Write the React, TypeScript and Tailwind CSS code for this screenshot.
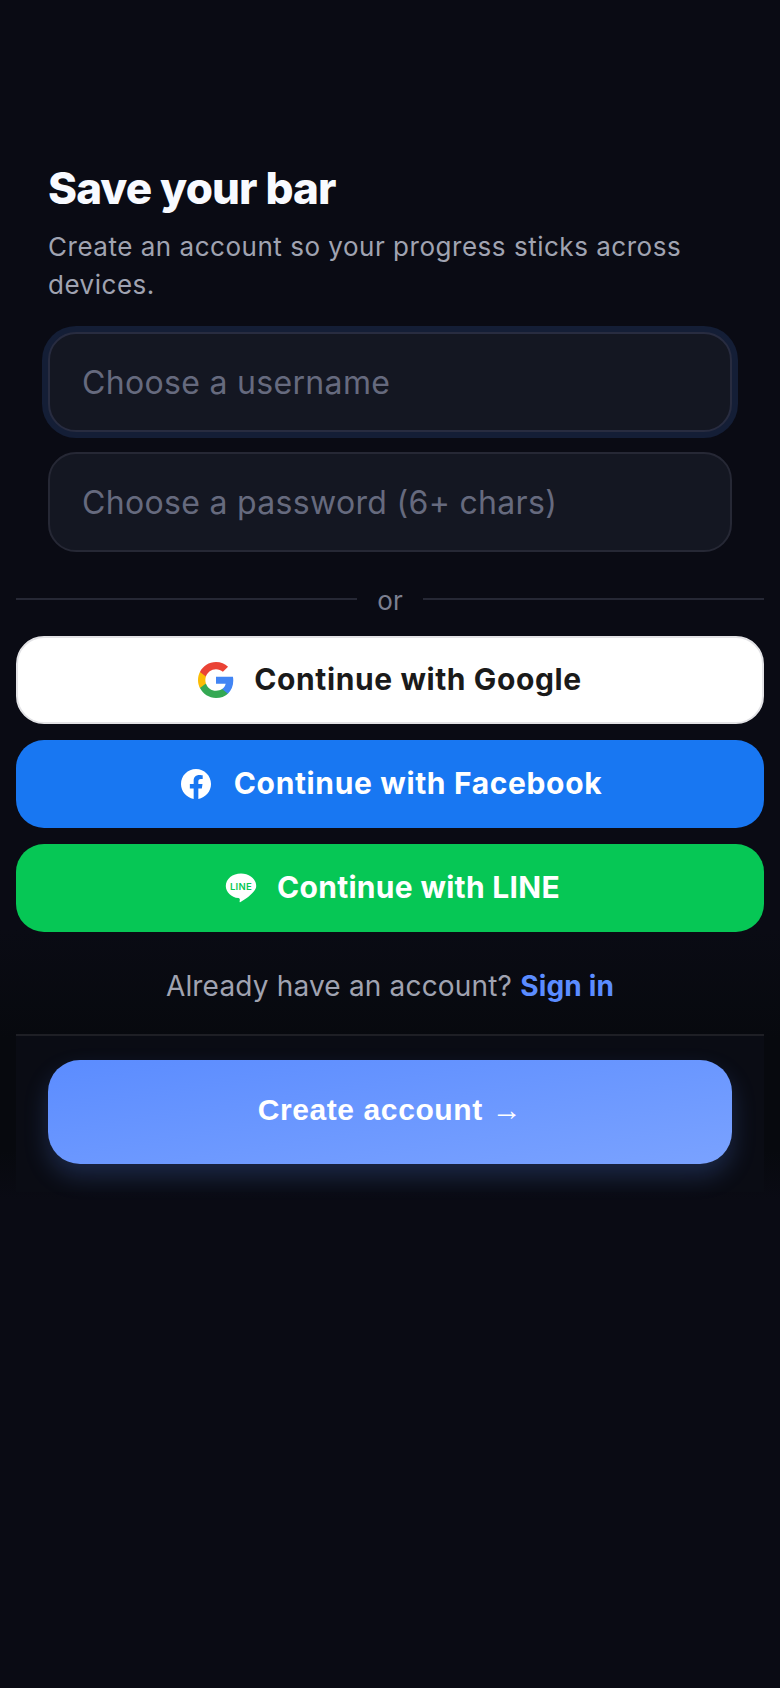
export default function App() {
  return (
    <div className="min-h-[1688px] bg-[linear-gradient(#0a0b14_930px,#07090e_1040px,#07090e_1150px,#0a0b14_1200px)] px-4 pt-[160px] font-['Inter',sans-serif]">
      <div className="px-8">
        <h1 className="text-[44px] leading-[56px] font-extrabold tracking-[-0.88px] text-[#f8faff]">Save your bar</h1>
        <p className="mt-3 text-[26px] leading-[38px] tracking-[0.52px] text-[#a0a3b1]">
          Create an account so your progress sticks across devices.
        </p>
        <input
          placeholder="Choose a username"
          className="mt-7 block h-[100px] w-full rounded-[28px] border-2 border-[#282c40] bg-[#141722] px-8 text-[32px] tracking-[0.32px] text-white shadow-[0_0_0_6px_#141e36] outline-none placeholder:text-[#666a7e]"
        />
        <input
          placeholder="Choose a password (6+ chars)"
          className="mt-5 block h-[100px] w-full rounded-[28px] border-2 border-[#262835] bg-[#141722] px-8 text-[32px] tracking-[0.32px] text-white outline-none placeholder:text-[#666a7e]"
        />
      </div>

      <div className="mt-[31px] flex h-8 items-center gap-5">
        <div className="h-[2px] flex-1 bg-[#262835]" />
        <span className="pt-1 text-[26px] leading-8 text-[#7c7f90]">or</span>
        <div className="h-[2px] flex-1 bg-[#262835]" />
      </div>

      <div className="mt-[21px] flex flex-col gap-4">
        <button className="flex h-[88px] items-center justify-center gap-5 rounded-[28px] border-2 border-[#e3e3e6] bg-white text-[30px] font-bold tracking-[0.6px] text-[#1a1a1a]">
          <svg width="36" height="36" viewBox="1 1 22 22">
            <path fill="#4285F4" d="M22.56 12.25c0-.78-.07-1.53-.2-2.25H12v4.26h5.92c-.26 1.37-1.04 2.53-2.21 3.31v2.77h3.57c2.08-1.92 3.28-4.74 3.28-8.09z" />
            <path fill="#34A853" d="M12 23c2.97 0 5.46-.98 7.28-2.66l-3.57-2.77c-.98.66-2.23 1.06-3.71 1.06-2.86 0-5.29-1.93-6.16-4.53H2.18v2.84C3.99 20.53 7.7 23 12 23z" />
            <path fill="#FBBC05" d="M5.84 14.09c-.22-.66-.35-1.36-.35-2.09s.13-1.43.35-2.09V7.07H2.18C1.43 8.55 1 10.22 1 12s.43 3.45 1.18 4.93l2.85-2.22.81-.62z" />
            <path fill="#EA4335" d="M12 5.38c1.62 0 3.06.56 4.21 1.64l3.15-3.15C17.45 2.09 14.97 1 12 1 7.7 1 3.99 3.47 2.18 7.07l3.66 2.84c.87-2.6 3.3-4.53 6.16-4.53z" />
          </svg>
          <span className="pb-[2px]">Continue with Google</span>
        </button>
        <button className="flex h-[88px] items-center justify-center gap-[23px] rounded-[28px] bg-[#1877f2] pl-[3px] text-[30px] font-bold tracking-[0.64px] text-white">
          <svg width="30" height="30" viewBox="0 0 24 24" fill="#fff">
            <path d="M24 12.073c0-6.627-5.373-12-12-12s-12 5.373-12 12c0 5.99 4.388 10.954 10.125 11.854v-8.385H7.078v-3.47h3.047V9.43c0-3.007 1.792-4.669 4.533-4.669 1.312 0 2.686.235 2.686.235v2.953H15.83c-1.491 0-1.956.925-1.956 1.874v2.25h3.328l-.532 3.47h-2.796v8.385C19.612 23.027 24 18.062 24 12.073z" />
          </svg>
          <span className="pb-[2px]">Continue with Facebook</span>
        </button>
        <button className="flex h-[88px] items-center justify-center gap-5 rounded-[28px] bg-[#06c755] pl-[5px] text-[30px] font-bold tracking-[0.3px] text-white">
          <svg width="32" height="30" viewBox="0 0 32 30">
            <path fill="#fff" d="M16 .5C7.600 .5.800 6 .800 12.900c0 6.100 5.400 11.200 12.600 12.200.500.100 1.100.400 1.300.800.200.400.100 1 .100 1.400l-.200 1.300c-.100.400 0 .900.900.400 3.800-2 7.500-4.700 10.100-7.200 3-2.700 5.600-5.600 5.600-8.900C31.200 6 24.400.500 16 .500z" />
            <text x="16" y="17" textAnchor="middle" fontSize="9.500" fontWeight="600" fill="#06c755" fontFamily="Inter, sans-serif">LINE</text>
          </svg>
          <span className="pb-[2px]">Continue with LINE</span>
        </button>
      </div>

      <p className="mt-[35px] text-center text-[28px] leading-[38px] tracking-[0.18px] text-[#a0a3b1]">
        Already have an account? <a className="font-bold text-[#5b8cff]">Sign in</a>
      </p>

      <div className="mt-[29px] border-t-2 border-[#1e1f25] bg-[#0a0c14] px-8 pt-6 pb-7">
        <button className="h-[104px] w-full rounded-[32px] bg-linear-to-br from-[#5b8cff] to-[#7aa2ff] pb-[6px] font-['Liberation_Sans',sans-serif] text-[30px] font-bold tracking-[0.6px] text-white shadow-[0_12px_24px_rgba(91,140,255,0.22)]">
          Create account →
        </button>
      </div>
    </div>
  )
}
